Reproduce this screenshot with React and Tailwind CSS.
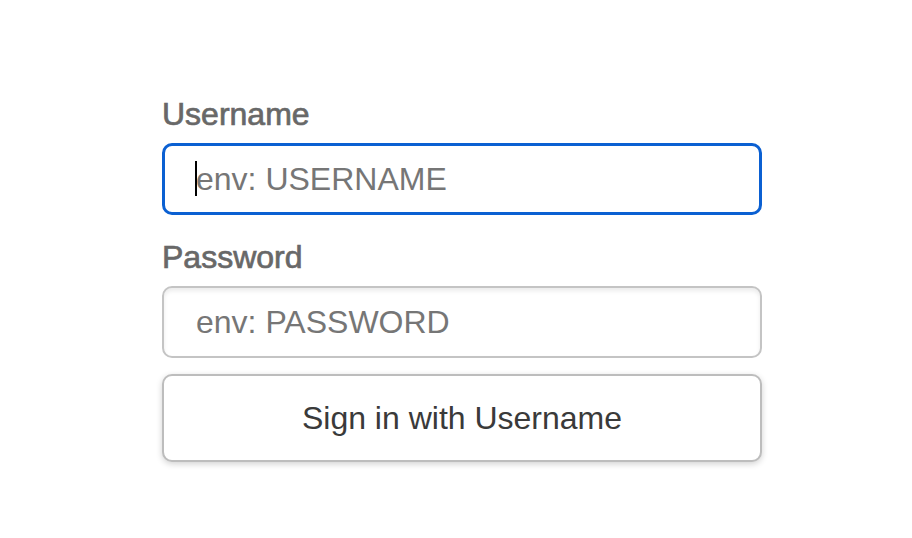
export default function App() {
  return (
    <div className="min-h-[538px] w-[912px] bg-white font-['Liberation_Sans',Arial,sans-serif]">
      <div className="w-[600px] ml-[162px] pt-[96px] flex flex-col">
        <label className="text-[32px] leading-[36px] font-normal text-[#686868] [-webkit-text-stroke:0.7px_#686868]">Username</label>
        <div className="relative mt-[11px]">
          <input
            type="text"
            placeholder="env: USERNAME"
            readOnly
            className="block w-full h-[72px] rounded-[10px] border-[3px] border-[#0b60d2] pl-[31px] text-[32px] text-[#333] placeholder:text-[#767676] outline-none bg-white"
          />
          <span className="absolute left-[33px] top-[18px] w-[2px] h-[35px] bg-black"></span>
        </div>
        <label className="mt-[24px] text-[32px] leading-[36px] font-normal text-[#686868] [-webkit-text-stroke:0.7px_#686868]">Password</label>
        <input
          type="password"
          placeholder="env: PASSWORD"
          readOnly
          className="mt-[11px] block w-full h-[72px] rounded-[10px] border-2 border-[#c4c4c4] pl-8 text-[32px] text-[#333] placeholder:text-[#767676] outline-none bg-white shadow-[inset_0_3px_4px_rgba(0,0,0,0.08)]"
        />
        <button className="mt-[16px] w-full h-[88px] rounded-[10px] border-2 border-[#bdbdbd] bg-white text-[32px] text-[#3a3a3a] shadow-[0_2px_6px_rgba(0,0,0,0.18)]">
          Sign in with Username
        </button>
      </div>
    </div>
  );
}
